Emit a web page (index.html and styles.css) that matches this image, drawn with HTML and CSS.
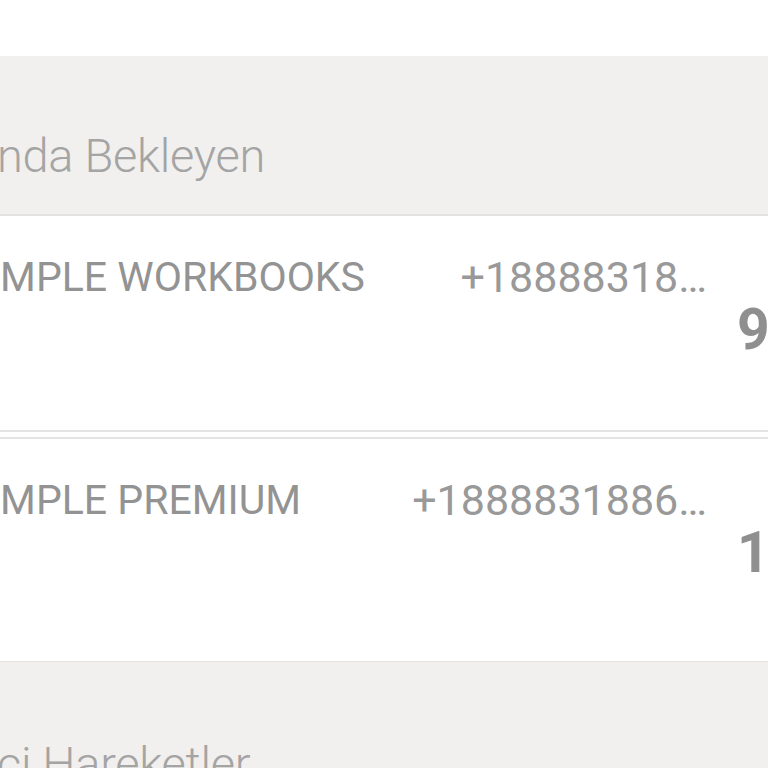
FILE: index.html
```html
<!DOCTYPE html>
<html lang="tr">

<head>
    <meta charset="UTF-8">
    <meta name="viewport" content="width=device-width, initial-scale=1.0">
    <title>Bekleyen</title>
    <link rel="stylesheet" href="styles.css">
</head>

<body>
    <div class="page">
        <div class="top-space"></div>

        <div class="section-head">
            <h2 class="section-title">nda Bekleyen</h2>
        </div>

        <div class="row row-first">
            <div class="name">SAMPLE WORKBOOKS</div>
            <div class="phone">+18888318…</div>
            <div class="count">9</div>
        </div>

        <div class="row row-second">
            <div class="name">SAMPLE PREMIUM</div>
            <div class="phone">+1888831886…</div>
            <div class="count">1</div>
        </div>

        <div class="section-head section-head-last">
            <h2 class="section-title">ci Hareketler</h2>
        </div>
    </div>
</body>

</html>
```

FILE: styles.css
```css
html,
body {
    margin: 0;
    height: 100%;
    overflow: hidden;
    background: #fff;
}

body {
    font-family: Roboto, "Noto Sans", sans-serif;
}

.page {
    width: 900px;
    margin-left: -51px;
}

.top-space {
    height: 56px;
}

.section-head {
    background: #f1f0ee;
    height: 160px;
    border-bottom: 2px solid #e3e2e0;
    box-sizing: border-box;
    padding: 76px 0 0 48px;
}

.section-head-last {
    height: 200px;
    border-bottom: none;
    border-top: 1px solid #e3e2e0;
    padding-top: 78px;
}

.section-title {
    margin: 0;
    font-size: 47px;
    line-height: 47px;
    font-weight: 300;
    letter-spacing: -0.3px;
    color: #a4a4a4;
}

.row {
    display: flex;
    align-items: flex-start;
    background: #fff;
    box-sizing: border-box;
}

.row-first {
    height: 216px;
    border-bottom: 2px solid #e4e4e4;
    margin-bottom: 5px;
}

.row-second {
    height: 224px;
    border-top: 2px solid #e4e4e4;
}

.name {
    flex: 1;
    min-width: 0;
    padding-top: 41px;
    font-size: 41px;
    line-height: 41px;
    color: #939393;
    white-space: nowrap;
}

.phone {
    flex: none;
    width: 300px;
    padding-top: 40px;
    font-size: 43px;
    line-height: 43px;
    color: #999;
    text-align: right;
    white-space: nowrap;
}

.count {
    flex: none;
    width: 142px;
    box-sizing: border-box;
    padding: 85px 0 0 30px;
    font-size: 57px;
    line-height: 57px;
    font-weight: 700;
    color: #8f8f8f;
}
```
